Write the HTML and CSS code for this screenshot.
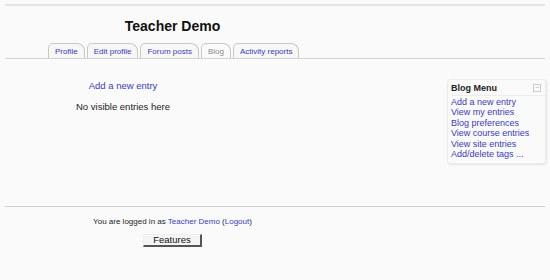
FILE: index.html
```html
<!DOCTYPE html>
<html>
<head>
<meta charset="utf-8">
<link rel="stylesheet" href="styles.css">
</head>
<body>
<div class="page">
  <div class="header">
    <h1 class="title">Teacher Demo</h1>
    <div class="tabs">
      <a class="tab">Profile</a>
      <a class="tab">Edit profile</a>
      <a class="tab">Forum posts</a>
      <span class="tab here">Blog</span>
      <a class="tab">Activity reports</a>
    </div>
  </div>
  <div class="content">
    <div class="main">
      <a class="add">Add a new entry</a>
      <p class="none">No visible entries here</p>
    </div>
    <div class="side">
      <div class="block">
        <div class="block-head">
          <span class="block-title">Blog Menu</span>
          <span class="hide">&#8722;</span>
        </div>
        <ul class="menu">
          <li><a>Add a new entry</a></li>
          <li><a>View my entries</a></li>
          <li><a>Blog preferences</a></li>
          <li><a>View course entries</a></li>
          <li><a>View site entries</a></li>
          <li><a>Add/delete tags ...</a></li>
        </ul>
      </div>
    </div>
  </div>
  <div class="footer">
    <p class="login">You are logged in as <a>Teacher Demo</a> (<a>Logout</a>)</p>
    <div class="btnrow"><span class="btn">Features</span></div>
  </div>
</div>
</body>
</html>
```
FILE: styles.css
```css
html, body {
  margin: 0;
  padding: 0;
  background: #fafafa;
  font-family: "Liberation Sans", Arial, sans-serif;
  font-size: 9px;
  color: #222;
}
a { color: #3a3ab8; text-decoration: none; }
.page {
  padding: 4px 5px 0 5px;
}
.header {
  border-top: 2px solid #e4e4e4;
  border-bottom: 1px solid #d4d4d4;
  width: 540px;
}
.title {
  margin: 12px 0 0 0;
  width: 335px;
  text-align: center;
  font-size: 14px;
  font-weight: bold;
  color: #111;
  line-height: 16px;
}
.tabs {
  display: flex;
  margin: 9px 0 0 43px;
  gap: 2px;
  height: 15px;
  align-items: flex-end;
}
.tab {
  display: block;
  height: 14px;
  line-height: 15px;
  padding: 0 6px 0 6px;
  border: 1px solid #c8c8c8;
  border-bottom: none;
  border-radius: 5px 8px 0 0;
  background: #f7f7f7;
  color: #3a3ab8;
  font-size: 8px;
}
.tab.here {
  color: #888;
  background: #fafafa;
}
.content {
  display: flex;
  height: 147px;
  border-bottom: 1px solid #cfcfcf;
  width: 540px;
}
.main {
  width: 236px;
  text-align: center;
  padding-top: 21px;
}
.add {
  display: block;
  font-size: 9.5px;
  line-height: 12px;
}
.none {
  margin: 9px 0 0 0;
  font-size: 9.5px;
  line-height: 12px;
  color: #222;
}
.side {
  margin-left: auto;
  padding-top: 20px;
  width: 98px;
}
.block {
  border: 1px solid #ececec;
  border-radius: 3px;
  width: 94px;
  padding: 0 0 4px 3px;
  box-shadow: 1px 1px 2px #e4e4e4;
}
.block-head {
  display: flex;
  justify-content: space-between;
  align-items: center;
  padding: 3px 4px 2px 0;
  border-bottom: 1px solid #ececec;
}
.block-title {
  font-weight: bold;
  font-size: 9px;
  color: #222;
}
.hide {
  display: inline-block;
  width: 6px;
  height: 6px;
  border: 1px solid #ccc;
  font-size: 7px;
  line-height: 6px;
  text-align: center;
  color: #aaa;
}
.menu {
  list-style: none;
  margin: 1px 0 0 0;
  padding: 0;
}
.menu li {
  line-height: 10.4px;
  font-size: 9px;
}
.footer {
  width: 335px;
  text-align: center;
  padding-top: 10px;
}
.login {
  margin: 0;
  font-size: 8px;
  line-height: 10px;
}
.btnrow {
  margin-top: 7px;
}
.btn {
  display: inline-block;
  width: 56px;
  height: 10px;
  line-height: 10px;
  font-size: 9.5px;
  background: #f4f4f4;
  border-top: 1px solid #eee;
  border-left: 1px solid #eee;
  border-right: 2px solid #555;
  border-bottom: 2px solid #555;
  color: #111;
}
```
